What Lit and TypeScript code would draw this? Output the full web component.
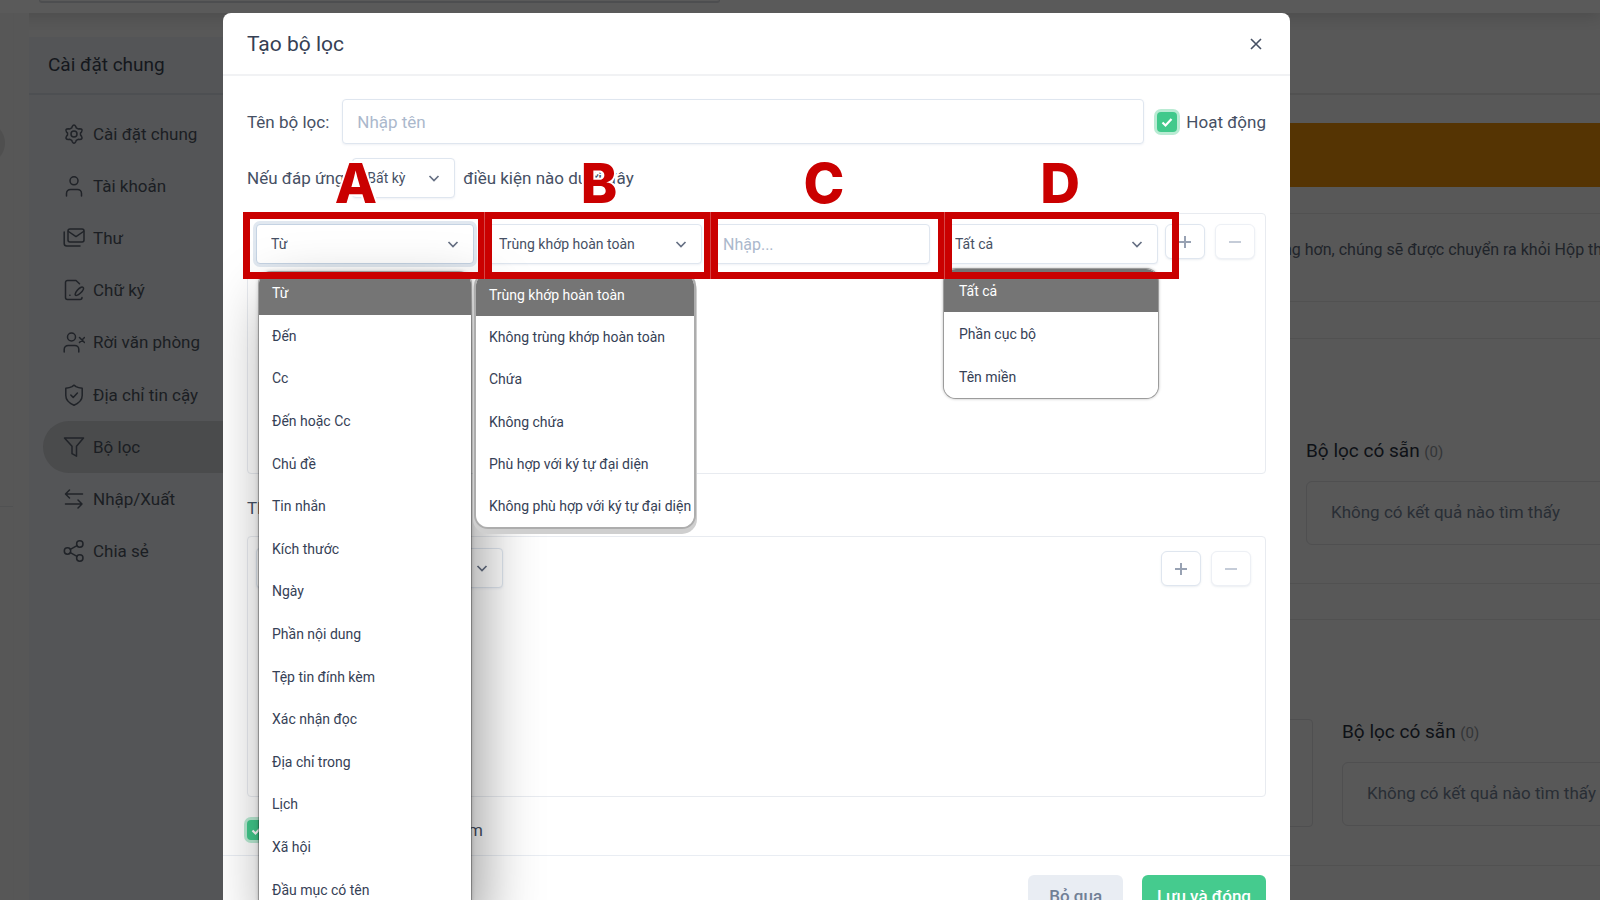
import { LitElement, html, css, svg } from "lit";
import { customElement, property } from "lit/decorators.js";
import { classMap } from "lit/directives/class-map.js";

const icons: Record<string, unknown> = {
  gear: svg`<path d="M9.200 2.600Q11-.6 12.800 2.600l.5 1.300 1.800 1 1.500-.2q3.600 0 1.900 3.200l-1 1.200v1.900l1 1.300q1.700 3.200-1.900 3.200l-1.500-.2-1.800 1-.5 1.300q-1.800 3.200-3.600 0l-.5-1.300-1.800-1-1.500.2q-3.600 0-1.900-3.200l1-1.300V9.100l-1-1.200q-1.700-3.200 1.900-3.200l1.500.2 1.800-1z" transform="translate(0 1)"/><circle cx="11" cy="11" r="3"/>`,
  user: svg`<circle cx="11" cy="5.8" r="4"/><path d="M3.500 21v-2.600a4 4 0 0 1 4-4h7a4 4 0 0 1 4 4V21"/>`,
  mail: svg`<rect x="5" y="2" width="16" height="13" rx="2"/><path d="M5.500 4.500 13 9.600l7.500-5.100M1.200 5v11.500a2.500 2.500 0 0 0 2.500 2.500H17"/>`,
  sign: svg`<path d="M16.500 4.800 13 1.500H4.500a2 2 0 0 0-2 2v15a2 2 0 0 0 2 2H17a2 2 0 0 0 2-2M12.200 15.200c.5-2.500 3.600-6.200 6-7 1.800-.5 2.700.6 2.200 2-1 2.500-4.500 5.600-6.700 6.200-1.100.3-1.700-.2-1.500-1.200zM6.800 16.200h.2"/>`,
  away: svg`<circle cx="8.500" cy="6" r="4"/><path d="M1.200 21v-2.600a4 4 0 0 1 4-4h6.600a4 4 0 0 1 4 4V21M16.500 6.500l5 5M21.500 6.500l-5 5"/>`,
  shield: svg`<path d="M11 1.200 13 2.600c1.800 1 3.600 1.400 6.200 1.600v7.300c0 5-4.200 8-8.200 9.700-4-1.700-8.200-4.700-8.200-9.700V4.200C5.400 4 7.200 3.600 9 2.600z"/><path d="m7.800 11 2.400 2.400 4.200-4.300"/>`,
  funnel: svg`<path d="M1.500 2h19l-7 8.200v10l-4.500-2.500v-7.500z"/>`,
  swap: svg`<path d="M19.500 6H3M6.500 2 2.500 6l4 4M2.500 16h16.500M15 12l4 4-4 4"/>`,
  share: svg`<circle cx="4.500" cy="11" r="3.200"/><circle cx="16.800" cy="4" r="3.200"/><circle cx="16.800" cy="18" r="3.200"/><path d="m7.300 9.400 6.700-3.800M7.300 12.600l6.700 3.800"/>`,
};

const navItems = [
  ["gear", "Cài đặt chung"],
  ["user", "Tài khoản"],
  ["mail", "Thư"],
  ["sign", "Chữ ký"],
  ["away", "Rời văn phòng"],
  ["shield", "Địa chỉ tin cậy"],
  ["funnel", "Bộ lọc"],
  ["swap", "Nhập/Xuất"],
  ["share", "Chia sẻ"],
];

const fieldOptions = [
  "Từ", "Đến", "Cc", "Đến hoặc Cc", "Chủ đề", "Tin nhắn", "Kích thước", "Ngày",
  "Phần nội dung", "Tệp tin đính kèm", "Xác nhận đọc", "Địa chỉ trong", "Lịch",
  "Xã hội", "Đầu mục có tên",
];
const matchOptions = [
  "Trùng khớp hoàn toàn", "Không trùng khớp hoàn toàn", "Chứa", "Không chứa",
  "Phù hợp với ký tự đại diện", "Không phù hợp với ký tự đại diện",
];
const partOptions = ["Tất cả", "Phần cục bộ", "Tên miền"];

@customElement("settings-page")
class SettingsPage extends LitElement {
  static styles = css`
    :host { display: flex; flex-direction: column; height: 100%; background: #585858; color: #20242a; font: 17px/20px Roboto, sans-serif; }
    * { box-sizing: border-box; }
    .top { height: 13px; flex: none; padding: 0 880px 0 39px; box-shadow: 0 2px 16px rgba(0, 0, 0, .18); background: #5a5a5a; }
    .search { height: 3px; border: solid #4d4e50; border-width: 0 1px 2px; border-radius: 0 0 4px 4px; }
    .columns { flex: 1; display: grid; grid-template-columns: 14px 15px 230px 1fr; min-height: 0; }
    .rail { background: #575757; padding-top: 109px; overflow: hidden; border-right: 1px solid #565656; }
    .knob { width: 42px; height: 42px; margin-left: -37px; border-radius: 50%; background: #4f4f4f; }
    .rail hr { border: 0; border-top: 1px solid #505152; margin: 342px 0 0; }
    .gutter { background: #575757; }
    .side { margin-top: 24px; background: #545557; }
    .side h2 { margin: 0; padding: 16px 19px 0; height: 58px; border-bottom: 2px solid #4d4f52; font-size: 19px; line-height: 24px; font-weight: 400; color: #15181d; }
    .nav { display: grid; grid-template-rows: repeat(9, 1fr); height: 469px; padding-left: 14px; margin-top: 13px; }
    .nav a { display: flex; align-items: center; gap: 8px; padding-left: 20px; border-radius: 26px 0 0 26px; color: #1b1e23; text-decoration: none; white-space: nowrap; }
    .nav a.active { background: #4a4b4c; }
    .nav svg { width: 22px; height: 22px; flex: none; fill: none; stroke: #202328; stroke-width: 1.5; stroke-linecap: round; stroke-linejoin: round; }
    .content { display: flex; flex-direction: column; min-width: 0; }
    .bar { height: 82px; border-bottom: 2px solid #515151; flex: none; }
    .banner { height: 64px; margin-top: 28px; background: #553403; flex: none; }
    .note { margin: 26px 0 0; height: 89px; border: solid #515151; border-width: 1px 0; padding: 26px 0 0 1024px; font-size: 16px; white-space: nowrap; overflow: hidden; flex: none; }
    .panel { height: 246px; margin-top: 36px; border: solid #515151; border-width: 1px 0; padding: 99px 0 0 1047px; flex: none; overflow: hidden; }
    .panel.second { display: grid; grid-template-columns: 1fr 258px; column-gap: 29px; padding: 99px 0 0 200px; margin-top: 35px; height: 247px; }
    .source { border: 1px solid #4f4f50; border-radius: 4px; height: 108px; }
    .panel h3 { margin: 0 0 16px; font-size: 19px; line-height: 26px; font-weight: 400; color: #0e1116; white-space: nowrap; }
    .panel h3 small { font-size: 15px; color: #333537; }
    .empty { height: 64px; margin-right: -8px; border: 1px solid #4f4f50; border-radius: 6px; padding: 20px 24px; color: #292e35; white-space: nowrap; }
  `;
  render() {
    const available = html`<h3>Bộ lọc có sẵn <small>(0)</small></h3>
      <div class="empty">Không có kết quả nào tìm thấy</div>`;
    return html`
      <div class="top"><div class="search"></div></div>
      <div class="columns">
        <div class="rail"><div class="knob"></div><hr /></div>
        <div class="gutter"></div>
        <aside class="side">
          <h2>Cài đặt chung</h2>
          <nav class="nav">
            ${navItems.map(
              ([icon, label]) => html`<a href="#" class=${classMap({ active: icon === "funnel" })}>
                <svg viewBox="0 0 22 22" aria-hidden="true">${icons[icon]}</svg>${label}</a>`
            )}
          </nav>
        </aside>
        <main class="content">
          <div class="bar"></div>
          <div class="banner"></div>
          <p class="note">ng hơn, chúng sẽ được chuyển ra khỏi Hộp thư</p>
          <section class="panel">${available}</section>
          <section class="panel second"><div class="source"></div><div>${available}</div></section>
        </main>
      </div>
    `;
  }
}

@customElement("option-list")
class OptionList extends LitElement {
  @property({ attribute: false }) items: string[] = [];
  static styles = css`
    ul { display: grid; grid-auto-rows: 1fr; height: 100%; margin: 0; padding: 0; list-style: none; border-radius: inherit; overflow: hidden; background: #fff; color: #364156; font: 14px/20px Roboto, sans-serif; white-space: nowrap; }
    li { display: flex; align-items: center; padding-left: var(--indent, 13px); }
    li.selected { background: #757575; color: #fff; }
  `;
  render() {
    return html`<ul role="listbox">
      ${this.items.map((text, i) => html`<li role="option" class=${classMap({ selected: i === 0 })}>${text}</li>`)}
    </ul>`;
  }
}

@customElement("app-root")
class AppRoot extends LitElement {
  static styles = css`
    :host { display: block; position: relative; height: 100vh; overflow: hidden; color: #465064; font: 17px/20px Roboto, sans-serif; }
    * { box-sizing: border-box; }
    .overlay { position: absolute; inset: 0; padding: 13px 310px 0 223px; }
    .modal { background: #fff; border-radius: 8px 8px 0 0; overflow: hidden; }
    .head { display: flex; align-items: center; justify-content: space-between; height: 63px; padding: 0 24px; border-bottom: 2px solid #f1f2f4; }
    .head h1 { margin: 0; font-size: 21px; line-height: 28px; font-weight: 400; color: #364054; }
    .close { width: 20px; height: 20px; padding: 0; border: 0; background: none; }
    svg { display: block; fill: none; stroke: currentColor; stroke-width: 2; }
    .close svg { width: 20px; height: 20px; color: #465064; }
    .body { padding: 23px 24px 0; }
    .line { display: flex; align-items: center; }
    input, select { font: 14px/20px Roboto, sans-serif; color: #465064; border: 1px solid #dfe6ef; border-radius: 4px; background: #fff; height: 40px; width: 100%; min-width: 0; margin: 0; outline: 0; box-shadow: 0 1px 2px rgba(120, 140, 170, .12); }
    input::placeholder { color: #abb8cc; opacity: 1; }
    .name { flex: 1; height: 45px; padding: 0 14px; margin: 0 13px; font-size: 17px; }
    .check { display: flex; align-items: center; gap: 9px; white-space: nowrap; }
    .check input { appearance: none; flex: none; width: 20px; height: 20px; border: 0; border-radius: 4px; background: #41c98b; box-shadow: 0 0 0 3px #b9ebd3; }
    .tick { position: relative; }
    .tick svg { position: absolute; inset: 3px; width: 14px; height: 14px; color: #fff; stroke-width: 2.2; pointer-events: none; }
    .rule { margin-top: 14px; gap: 8px; white-space: nowrap; }
    .select { position: relative; }
    select { appearance: none; padding: 0 30px 0 14px; }
    .select > svg { position: absolute; right: 13px; top: 12px; width: 16px; height: 16px; color: #667084; stroke-width: 1.7; pointer-events: none; }
    .any { width: 103px; }
    .box { position: relative; height: 261px; border: 1px solid #e8ebf0; border-radius: 4px; }
    .conditions { margin-top: 15px; padding: 10px 10px 0 8px; display: grid; grid-template-columns: repeat(4, 1fr) 87px; column-gap: 10px; align-items: start; }
    .focused select { border-color: #c5d3e3; box-shadow: 0 0 0 3px #e1e8f0; }
    .value { padding: 0 10px; font-size: 16px; }
    .steps { display: flex; gap: 10px; margin-left: -3px; }
    .step { display: grid; place-items: center; width: 40px; height: 35px; flex: none; padding: 0; border: 1px solid #dfe6ef; border-radius: 6px; background: #fff; color: #98a2b3; box-shadow: 0 1px 2px rgba(120, 140, 170, .15); }
    .step svg { width: 14px; height: 14px; }
    .step.off { color: #c5ccd8; border-color: #edf0f5; }
    .then { margin: 24px 0 18px; }
    .actions { display: flex; justify-content: space-between; padding: 11px 14px 0 8px; }
    .actions .select { width: 247px; }
    .actions .steps { margin-top: 3px; }
    .stop { margin-top: 23px; width: 236px; justify-content: space-between; }
    .foot { display: flex; justify-content: flex-end; gap: 19px; margin-top: 15px; padding: 19px 24px; border-top: 1px solid #e9edf3; }
    .foot button { height: 42px; padding: 0 15px; border: 0; border-radius: 6px; background: #45cb8e; color: #fff; font: 500 17px/20px Roboto, sans-serif; }
    .foot .skip { padding: 0 21px; background: #e9edf3; color: #718096; }
    option-list { position: absolute; z-index: 2; border-radius: 12px; }
    .list-a { left: 3px; right: 3px; top: 48px; height: 639px; box-shadow: 0 0 0 1px rgba(0, 0, 0, .25), 0 0 4px rgba(0, 0, 0, .3), 10px 25px 60px rgba(0, 0, 0, .4); }
    .list-b { left: -8px; right: 8px; top: 50px; height: 253px; z-index: 3; box-shadow: 0 0 0 2px #adadad, 0 4px 0 3px #cfcfcf; }
    .list-d { left: 4px; right: 0; top: 45px; height: 129px; box-shadow: 0 0 0 1px #9c9c9c, 0 0 3px 1px #bbb; --indent: 15px; }
    .marks { position: absolute; z-index: 4; left: -5px; right: 86px; top: -2px; height: 67px; display: grid; grid-template-columns: 242fr 226fr 234fr 234fr; pointer-events: none; }
    .marks span { border: 7px solid #ca0000; }
    .marks span + span { box-shadow: -1px 0 #d64545; }
    .letters { position: absolute; z-index: 4; left: -5px; right: 64px; top: -61px; display: grid; grid-template-columns: 226fr 260fr 190fr 282fr; text-align: center; color: #ca0000; font: 800 55px/60px Inter, sans-serif; -webkit-text-stroke: 4px #fff; paint-order: stroke fill; pointer-events: none; }
  `;

  private chevron() {
    return html`<svg viewBox="0 0 16 16" aria-hidden="true"><path d="m3.500 6 4.500 4.500L12.500 6" /></svg>`;
  }
  private tick() {
    return html`<svg viewBox="0 0 14 14" aria-hidden="true"><path d="m2.500 7.500 3 3 6-6.500" /></svg>`;
  }
  private steps() {
    return html`<div class="steps">
      <button class="step" aria-label="Thêm"><svg viewBox="0 0 14 14"><path d="M1 7h12M7 1v12" /></svg></button>
      <button class="step off" aria-label="Xóa"><svg viewBox="0 0 14 14"><path d="M1 7h12" /></svg></button>
    </div>`;
  }
  private picker(label: string, items: string[], focused = false) {
    return html`<div class="select ${focused ? "focused" : ""}">
      <select aria-label=${label}>${items.map((t) => html`<option>${t}</option>`)}</select>
      ${this.chevron()}
      <option-list class="list-${label.toLowerCase()}" .items=${items}></option-list>
    </div>`;
  }

  render() {
    return html`
      <settings-page></settings-page>
      <div class="overlay">
        <div class="modal" role="dialog" aria-labelledby="title">
          <header class="head">
            <h1 id="title">Tạo bộ lọc</h1>
            <button class="close" aria-label="Đóng">
              <svg viewBox="0 0 20 20"><path d="m5 5 10 10M15 5 5 15" stroke-width="1.600" /></svg>
            </button>
          </header>
          <div class="body">
            <div class="line">
              <label for="name">Tên bộ lọc:</label>
              <input class="name" id="name" placeholder="Nhập tên" />
              <label class="check"><span class="tick line"><input type="checkbox" checked />${this.tick()}</span>Hoạt động</label>
            </div>
            <div class="line rule">
              <label for="any">Nếu đáp ứng</label>
              <div class="select any"><select id="any"><option>Bất kỳ</option></select>${this.chevron()}</div>
              <span>điều kiện nào dưới đây</span>
            </div>
            <div class="box conditions">
              ${this.picker("A", fieldOptions, true)}
              ${this.picker("B", matchOptions)}
              <input class="value" aria-label="C" placeholder="Nhập..." />
              ${this.picker("D", partOptions)}
              ${this.steps()}
              <div class="marks"><span></span><span></span><span></span><span></span></div>
              <div class="letters"><span>A</span><span>B</span><span>C</span><span>D</span></div>
            </div>
            <div class="then">Thì</div>
            <div class="box actions">
              <div class="select"><select aria-label="Thì"><option></option></select>${this.chevron()}</div>
              ${this.steps()}
            </div>
            <label class="check stop"><span class="tick line"><input type="checkbox" checked />${this.tick()}</span>m</label>
          </div>
          <footer class="foot">
            <button class="skip">Bỏ qua</button>
            <button>Lưu và đóng</button>
          </footer>
        </div>
      </div>
    `;
  }
}
